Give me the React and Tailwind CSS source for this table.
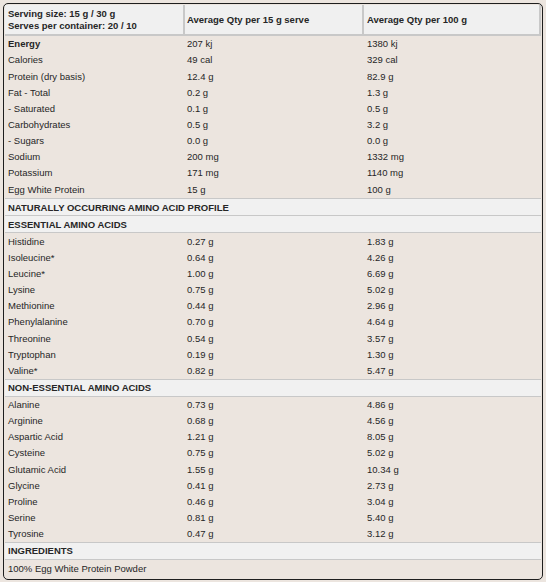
import React from "react";

const nutrition = [
  ["Energy", "207 kj", "1380 kj", true],
  ["Calories", "49 cal", "329 cal"],
  ["Protein (dry basis)", "12.4 g", "82.9 g"],
  ["Fat - Total", "0.2 g", "1.3 g"],
  ["- Saturated", "0.1 g", "0.5 g"],
  ["Carbohydrates", "0.5 g", "3.2 g"],
  ["- Sugars", "0.0 g", "0.0 g"],
  ["Sodium", "200 mg", "1332 mg"],
  ["Potassium", "171 mg", "1140 mg"],
  ["Egg White Protein", "15 g", "100 g"],
];

const essential = [
  ["Histidine", "0.27 g", "1.83 g"],
  ["Isoleucine*", "0.64 g", "4.26 g"],
  ["Leucine*", "1.00 g", "6.69 g"],
  ["Lysine", "0.75 g", "5.02 g"],
  ["Methionine", "0.44 g", "2.96 g"],
  ["Phenylalanine", "0.70 g", "4.64 g"],
  ["Threonine", "0.54 g", "3.57 g"],
  ["Tryptophan", "0.19 g", "1.30 g"],
  ["Valine*", "0.82 g", "5.47 g"],
];

const nonEssential = [
  ["Alanine", "0.73 g", "4.86 g"],
  ["Arginine", "0.68 g", "4.56 g"],
  ["Aspartic Acid", "1.21 g", "8.05 g"],
  ["Cysteine", "0.75 g", "5.02 g"],
  ["Glutamic Acid", "1.55 g", "10.34 g"],
  ["Glycine", "0.41 g", "2.73 g"],
  ["Proline", "0.46 g", "3.04 g"],
  ["Serine", "0.81 g", "5.40 g"],
  ["Tyrosine", "0.47 g", "3.12 g"],
];

function Row({ cells }) {
  const [a, b, c, bold] = cells;
  return (
    <div className="grid h-[16.15px] grid-cols-[180px_179px_1fr] items-center">
      <div className={`pl-[3px] ${bold ? "font-bold" : ""}`}>{a}</div>
      <div className="pl-[2px]">{b}</div>
      <div className="pl-[3px]">{c}</div>
    </div>
  );
}

function Section({ title }) {
  return (
    <div className="flex h-[18px] items-center border-y border-[#c8c8c8] bg-[#f1f1f1] pl-[3px] font-bold">
      {title}
    </div>
  );
}

export default function App() {
  return (
    <div className="h-[582px] w-[546px] bg-[#ece5df] p-[3px] font-['Liberation_Sans',Arial,sans-serif] text-[9.5px] leading-none text-[#262626]">
      <div className="h-[577px] w-[540px] overflow-hidden rounded-[5px] border border-[#1e1e1e] px-px pt-px">
        <div className="grid h-[31px] grid-cols-[180px_179px_1fr] border-b-2 border-[#c8c8c8] bg-[#f0f0f0] font-bold">
          <div className="flex flex-col justify-center gap-[3px] border-r-2 border-[#c8c8c8] pl-[3px]">
            <div>Serving size: 15 g / 30 g</div>
            <div>Serves per container: 20 / 10</div>
          </div>
          <div className="flex items-center border-r-2 border-[#c8c8c8] pl-[2px]">
            Average Qty per 15 g serve
          </div>
          <div className="flex items-center border-r-2 border-[#c8c8c8] pl-[3px]">
            Average Qty per 100 g
          </div>
        </div>
        <div>
          {nutrition.map((r) => (
            <Row key={r[0]} cells={r} />
          ))}
        </div>
        <div className="mt-[1px]">
          <Section title="NATURALLY OCCURRING AMINO ACID PROFILE" />
          <div className="-mt-px">
            <Section title="ESSENTIAL AMINO ACIDS" />
          </div>
        </div>
        {essential.map((r) => (
          <Row key={r[0]} cells={r} />
        ))}
        <Section title="NON-ESSENTIAL AMINO ACIDS" />
        {nonEssential.map((r) => (
          <Row key={r[0]} cells={r} />
        ))}
        <Section title="INGREDIENTS" />
        <div className="flex h-[17px] items-center pl-[3px]">100% Egg White Protein Powder</div>
      </div>
    </div>
  );
}
